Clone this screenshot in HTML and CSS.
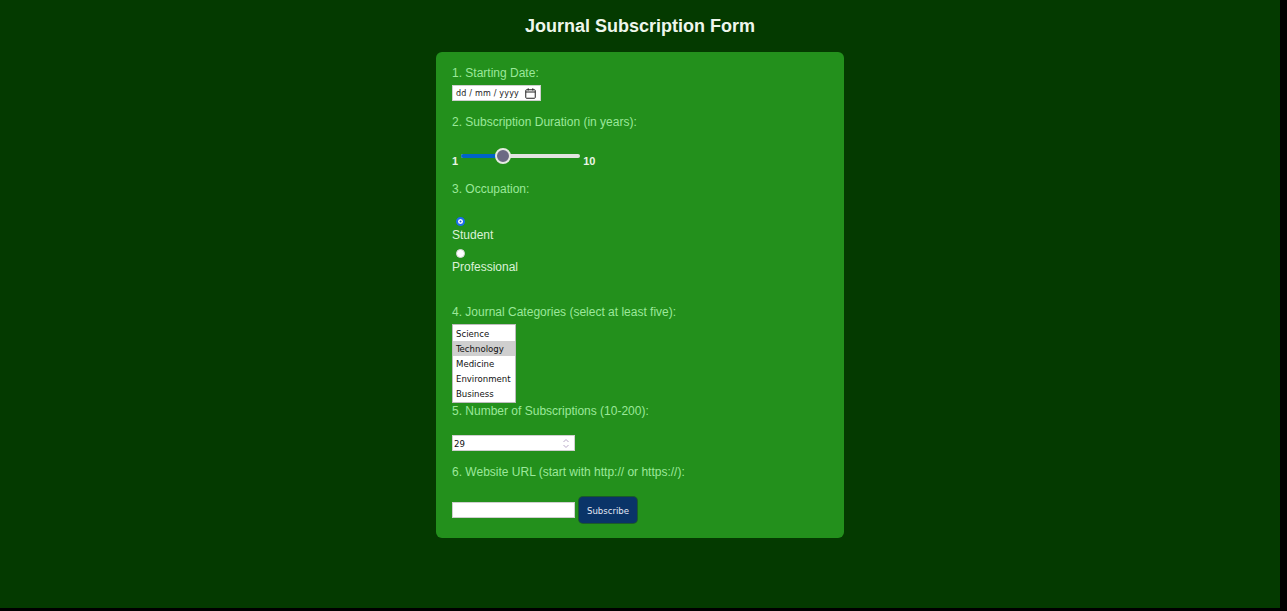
FILE: index.html
```html
<!DOCTYPE html>
<html lang="en">
<head>
<meta charset="utf-8">
<title>Journal Subscription Form</title>
<link rel="stylesheet" href="styles.css">
</head>
<body>
<div class="screen">
  <h1 class="title">Journal Subscription Form</h1>
  <form class="card">
    <div class="field f-date">
      <label class="lbl">1. Starting Date:</label>
      <div class="date-input">
        <span class="date-text">dd / mm / yyyy</span>
        <svg class="cal" width="11" height="11" viewBox="0 0 11 11"><rect x="0.75" y="1.75" width="9.5" height="8.5" rx="0.8" fill="none" stroke="#222" stroke-width="1"/><line x1="0.75" y1="4" x2="10.25" y2="4" stroke="#222" stroke-width="1"/><line x1="3.2" y1="0.3" x2="3.2" y2="2.5" stroke="#222" stroke-width="1"/><line x1="7.8" y1="0.3" x2="7.8" y2="2.5" stroke="#222" stroke-width="1"/></svg>
      </div>
    </div>
    <div class="field f-range">
      <label class="lbl">2. Subscription Duration (in years):</label>
      <div class="range-row">
        <span class="rng-lbl">1</span>
        <div class="range">
          <div class="track"><div class="fill"></div></div>
          <div class="thumb"></div>
        </div>
        <span class="rng-lbl">10</span>
      </div>
    </div>
    <div class="field f-occ">
      <label class="lbl">3. Occupation:</label>
      <div class="radios">
        <span class="radio checked"></span>
        <span class="opt">Student</span>
        <span class="radio"></span>
        <span class="opt">Professional</span>
      </div>
    </div>
    <div class="field f-cat">
      <label class="lbl">4. Journal Categories (select at least five):</label>
      <div class="listbox">
        <div class="item">Science</div>
        <div class="item sel">Technology</div>
        <div class="item">Medicine</div>
        <div class="item">Environment</div>
        <div class="item">Business</div>
      </div>
    </div>
    <div class="field f-num">
      <label class="lbl">5. Number of Subscriptions (10-200):</label>
      <div class="num-input">
        <span class="num-val">29</span>
        <svg class="spin" width="8" height="11" viewBox="0 0 8 11"><polyline points="1.5,4 4,1.5 6.5,4" fill="none" stroke="#b9a9c9" stroke-width="1"/><polyline points="1.5,7 4,9.5 6.5,7" fill="none" stroke="#b9a9c9" stroke-width="1"/></svg>
      </div>
    </div>
    <div class="field f-url">
      <label class="lbl">6. Website URL (start with http:// or https://):</label>
      <div class="url-row">
        <input class="url-input" type="text">
        <button class="btn" type="button">Subscribe</button>
      </div>
    </div>
  </form>
</div>
</body>
</html>
```
FILE: styles.css
```css
html { background: #000; }
body {
  margin: 0;
  font-family: "Liberation Sans", Arial, sans-serif;
}
.screen {
  width: 1280px;
  height: 608px;
  background: #043a00;
  display: flex;
  flex-direction: column;
  align-items: center;
  overflow: hidden;
}
.title {
  margin: 15px 0 0;
  font-size: 18px;
  line-height: 22px;
  font-weight: bold;
  color: #eef6ec;
}
.card {
  margin-top: 15px;
  width: 376px;
  padding: 14px 16px 15px;
  background: #23901c;
  border-radius: 6px;
  display: flex;
  flex-direction: column;
}
.lbl {
  display: block;
  font-size: 12px;
  line-height: 14px;
  color: #9be89a;
}
.date-input {
  margin-top: 5px;
  width: 87px;
  height: 14px;
  background: #fff;
  border: 1px solid #cfcfcf;
  display: flex;
  align-items: center;
  padding: 0;
}
.date-text {
  font-family: "DejaVu Sans", sans-serif;
  font-size: 8px;
  color: #222;
  margin-left: 3px;
  letter-spacing: 0.2px;
}
.cal { margin-left: 6px; }
.f-range { margin-top: 14px; }
.range-row {
  margin-top: 18px;
  display: flex;
  align-items: flex-end;
  height: 20px;
}
.rng-lbl {
  font-size: 11px;
  font-weight: bold;
  color: #e9f5e6;
  line-height: 12px;
}
.range {
  position: relative;
  width: 119px;
  height: 20px;
  margin: 0 3px 0 3px;
}
.track {
  position: absolute;
  left: 0; right: 0; top: 7px;
  height: 4px;
  border-radius: 2px;
  background: #e2e4e0;
  overflow: hidden;
}
.fill {
  width: 42px;
  height: 100%;
  background: #0064c8;
}
.thumb {
  position: absolute;
  left: 34px;
  top: 1px;
  width: 12px;
  height: 12px;
  border-radius: 50%;
  background: #6c6a84;
  border: 2px solid #e6ebe2;
}
.f-occ { margin-top: 15px; }
.radios {
  margin-top: 21px;
  display: flex;
  flex-direction: column;
  align-items: flex-start;
}
.radio {
  width: 9px;
  height: 9px;
  border-radius: 50%;
  background: #fff;
  margin-left: 4px;
  box-sizing: border-box;
  border: 1px solid #d6d6d6;
}
.radio.checked {
  border: 2px solid #1a6cf0;
  background: #fff;
  box-shadow: inset 0 0 0 1.5px #fff, inset 0 0 0 5px #1a56c8;
}
.opt {
  font-size: 12px;
  line-height: 14px;
  color: #dcf2d8;
  margin: 2px 0 7px;
}
.f-cat { margin-top: 24px; }
.listbox {
  margin-top: 5px;
  width: 62px;
  height: 76px;
  background: #fff;
  border: 1px solid #bdbdbd;
  padding-top: 1px;
  box-sizing: content-box;
}
.item {
  font-family: "DejaVu Sans Condensed", "DejaVu Sans", sans-serif;
  font-size: 9.5px;
  line-height: 15px;
  height: 15px;
  padding-left: 3px;
  color: #111;
  white-space: nowrap;
}
.item.sel { background: #cfcfcf; }
.f-num { margin-top: 1px; }
.num-input {
  margin-top: 17px;
  width: 121px;
  height: 14px;
  background: #fff;
  border: 1px solid #cfcfcf;
  display: flex;
  align-items: center;
  justify-content: space-between;
}
.num-val {
  font-family: "DejaVu Sans Condensed", "DejaVu Sans", sans-serif;
  font-size: 9.5px;
  color: #111;
  margin-left: 1px;
}
.spin { margin-right: 4px; }
.f-url { margin-top: 14px; }
.url-row {
  margin-top: 18px;
  display: flex;
  align-items: center;
}
.url-input {
  width: 123px;
  height: 16px;
  box-sizing: border-box;
  margin: 0;
  padding: 0;
  border: 1px solid #cfcfcf;
  background: #fff;
  outline: none;
}
.btn {
  margin-left: 4px;
  width: 58px;
  height: 26px;
  border: none;
  border-radius: 4px;
  background: #0a3468;
  color: #e4e8f4;
  font-family: "DejaVu Sans Condensed", "DejaVu Sans", sans-serif;
  font-size: 9.5px;
  padding: 0;
  box-shadow: 0 0 0 1px #1c5a2a;
}
```
